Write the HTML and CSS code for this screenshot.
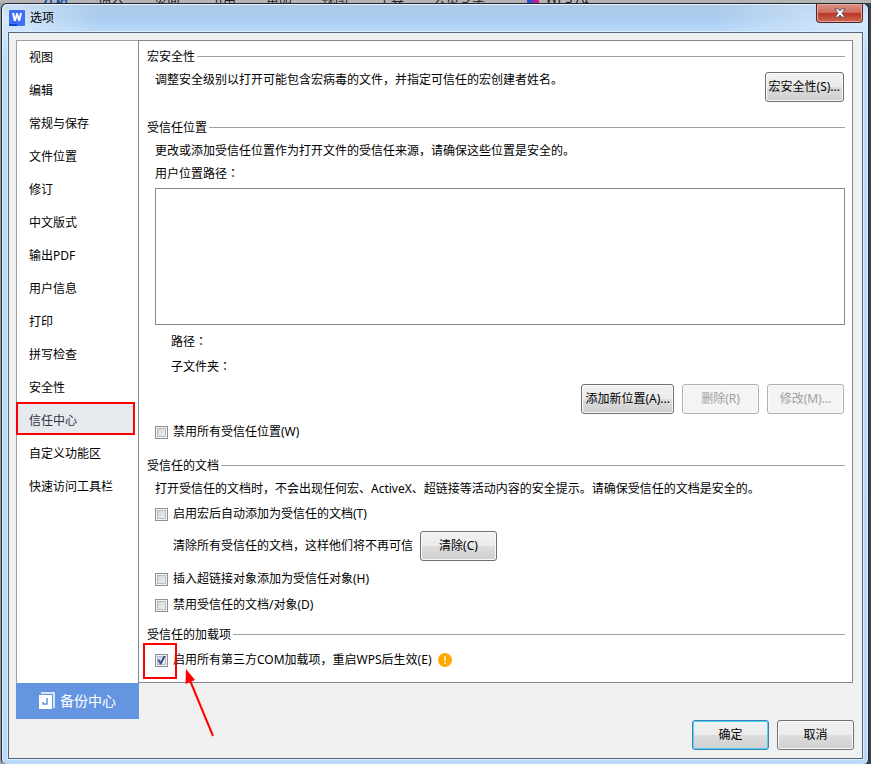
FILE: index.html
```html
<!DOCTYPE html>
<html lang="zh-CN">
<head>
<meta charset="utf-8">
<title>选项</title>
<link rel="stylesheet" href="styles.css">
</head>
<body>
<div class="ribbon" aria-hidden="true">
  <span class="tab active">开始</span><span class="tab">插入</span><span class="tab">页面</span><span class="tab">引用</span><span class="tab">审阅</span><span class="tab">视图</span><span class="tab">工具</span><span class="tab wide">会员专享</span><span class="ai-mark"></span><span class="tab">WPS AI</span>
</div>
<div class="window">
  <header class="titlebar">
    <svg class="logo" viewBox="0 0 16 16" aria-hidden="true">
      <rect width="16" height="16" rx="1" fill="#3f6df6"/>
      <path d="M0 14h8v2H1a1 1 0 0 1-1-1z" fill="#0b45c8"/>
      <path d="M3 3h2.200l.9 4.500L7.300 3h1.600l1.200 4.500L11 3h2l-1.900 8H9.200L8 7 6.800 11H4.900z" fill="#fff"/>
    </svg>
    <h1>选项</h1>
    <button class="close" aria-label="关闭">
      <svg viewBox="0 0 12 10" aria-hidden="true">
        <path d="M1 .8h3L6 3 8 .8h3L7.900 5 11 9.200H8L6 7 4 9.200H1L4.100 5z" fill="#fff" stroke="#53586a" stroke-width="1"/>
      </svg>
    </button>
  </header>
  <div class="client">
    <div class="panes">
      <nav class="sidebar">
        <a href="#">视图</a>
        <a href="#">编辑</a>
        <a href="#">常规与保存</a>
        <a href="#">文件位置</a>
        <a href="#">修订</a>
        <a href="#">中文版式</a>
        <a href="#">输出PDF</a>
        <a href="#">用户信息</a>
        <a href="#">打印</a>
        <a href="#">拼写检查</a>
        <a href="#">安全性</a>
        <a href="#" class="current" aria-current="page">信任中心</a>
        <a href="#">自定义功能区</a>
        <a href="#">快速访问工具栏</a>
      </nav>
      <main class="panel">
        <section class="group">
          <h2>宏安全性</h2>
          <div class="row split">
            <p>调整安全级别以打开可能包含宏病毒的文件，并指定可信任的宏创建者姓名。</p>
            <button class="btn tight">宏安全性(S)...</button>
          </div>
        </section>
        <section class="group">
          <h2>受信任位置</h2>
          <p class="row">更改或添加受信任位置作为打开文件的受信任来源，请确保这些位置是安全的。</p>
          <p class="row" id="paths">用户位置路径<span class="colon" lang="zh-TW">：</span></p>
          <div class="listbox" role="listbox" aria-labelledby="paths" tabindex="0"></div>
          <p class="row detail">路径<span class="colon" lang="zh-TW">：</span></p>
          <p class="row detail">子文件夹<span class="colon" lang="zh-TW">：</span></p>
          <div class="row actions">
            <button class="btn tight">添加新位置(A)...</button>
            <button class="btn" disabled>删除(R)</button>
            <button class="btn" disabled>修改(M)...</button>
          </div>
          <label class="row check"><input type="checkbox"><span>禁用所有受信任位置(W)</span></label>
        </section>
        <section class="group documents">
          <h2>受信任的文档</h2>
          <p class="row">打开受信任的文档时，不会出现任何宏、ActiveX、超链接等活动内容的安全提示。请确保受信任的文档是安全的。</p>
          <label class="row check"><input type="checkbox"><span>启用宏后自动添加为受信任的文档(T)</span></label>
          <div class="row clear">
            <p>清除所有受信任的文档，这样他们将不再可信</p>
            <button class="btn">清除(C)</button>
          </div>
          <label class="row check"><input type="checkbox"><span>插入超链接对象添加为受信任对象(H)</span></label>
          <label class="row check"><input type="checkbox"><span>禁用受信任的文档/对象(D)</span></label>
        </section>
        <section class="group">
          <h2>受信任的加载项</h2>
          <div class="row addin">
            <label class="check"><input type="checkbox" checked><span>启用所有第三方COM加载项，重启WPS后生效(E)</span></label>
            <svg class="warn" viewBox="0 0 14 14" aria-hidden="true">
              <circle cx="7" cy="7" r="7" fill="#ffa800"/>
              <path d="M6 3h2v5H6zM6 9h2v2H6z" fill="#ffe2a0"/>
            </svg>
            <svg class="callout" viewBox="0 0 72 96" aria-hidden="true">
              <rect x="1" y="1" width="32" height="34" fill="none" stroke="#f00" stroke-width="2"/>
              <path d="M46 35L70 93" stroke="#f00" stroke-width="2"/>
              <path d="M43 26L42.500 41 52 37z" fill="#f00"/>
            </svg>
          </div>
        </section>
      </main>
    </div>
    <footer class="footer">
      <button class="backup">
        <svg viewBox="0 0 16 18" aria-hidden="true">
          <path d="M2 1h13v15" fill="none" stroke="#fff" stroke-width="1.500"/>
          <path d="M0 3h13v14H0z" fill="#fff"/>
          <path d="M8 6v6H4v-2" fill="none" stroke="#6495e1" stroke-width="1.500"/>
        </svg>
        <span>备份中心</span>
      </button>
      <div class="confirm">
        <button class="btn primary">确定</button>
        <button class="btn">取消</button>
      </div>
    </footer>
  </div>
</div>
</body>
</html>
```
FILE: styles.css
```css
* {
  box-sizing: border-box;
}

body {
  margin: 0;
  min-height: 100vh;
  display: flex;
  flex-direction: column;
  background: linear-gradient(90deg, #9a9fa5 50%, #3c4146 50%);
  color: #000;
  font: 12px/16px "Noto Sans", "Noto Sans CJK SC", sans-serif;
}

h1, h2, p {
  margin: 0;
  font-size: 12px;
  font-weight: 400;
}

button {
  font: inherit;
}

/* Ribbon of the application behind the dialog */
.ribbon {
  height: 3px;
  padding-left: 27px;
  display: flex;
  align-items: flex-end;
  overflow: hidden;
  background: #b4b4b4;
  color: #222;
  font-size: 13px;
  line-height: 10px;
}

.tab {
  flex: none;
  width: 56px;
  text-align: center;
}

.tab.active {
  color: #1450b4;
  font-weight: 700;
}

.tab.wide {
  width: 80px;
}

.ai-mark {
  width: 12px;
  height: 3px;
  margin-left: 28px;
  background: linear-gradient(90deg, #2b4fd0 50%, #c02090 50%);
}

/* Window frame */
.window {
  flex: 1;
  margin: 0 2px 0 1px;
  padding: 0 5px 5px 6px;
  display: flex;
  flex-direction: column;
  border: 1px solid #20262e;
  border-bottom: 0;
  border-radius: 6px 6px 5px 5px;
  box-shadow: inset 1px 1px 0 #e8f3ff, inset -1px 0 0 #d8ecff;
  background:
    radial-gradient(100px 40px at 0 16px, #e2effccc, #e2effc00),
    radial-gradient(160px 40px at 100% 16px, #e2effccc, #e2effc00),
    linear-gradient(#aecae8, #a9cbee 14px, #b9dafb 28px, #b9d9f9);
}

.titlebar {
  height: 28px;
  display: flex;
  align-items: center;
  gap: 5px;
  padding-left: 1px;
}

.logo {
  width: 16px;
  height: 16px;
}

.close {
  width: 47px;
  height: 19px;
  margin-left: auto;
  align-self: flex-start;
  padding: 0;
  display: flex;
  align-items: center;
  justify-content: center;
  border: 1px solid #4d2529;
  border-top: 0;
  border-radius: 0 0 4px 4px;
  box-shadow: inset 0 0 0 1px #e5a69c;
  background: linear-gradient(#dc9488, #cd6a5a 48%, #b83422 50%, #d26650);
}

.close svg {
  width: 12px;
  height: 10px;
}

.client {
  flex: 1;
  display: flex;
  flex-direction: column;
  padding: 7px 9px 0 7px;
  border: 1px solid #56677c;
  box-shadow: 0 0 0 1px #d9ecff;
  background: #f0f0f0;
}

.panes {
  flex: 1;
  display: flex;
}

.sidebar {
  width: 122px;
  border: 1px solid #a0a0a0;
  border-right: 0;
  border-bottom: 0;
  background: #fff;
}

.sidebar a {
  position: relative;
  display: flex;
  align-items: center;
  height: 33px;
  padding-left: 12px;
  color: #000;
  text-decoration: none;
}

.sidebar .current {
  z-index: 0;
  color: #334;
}

.sidebar .current::before {
  content: "";
  position: absolute;
  inset: -2px 3px 2px -1px;
  z-index: -1;
  border: 2px solid #f00;
  background: #e6e9ee;
}

.panel {
  flex: 1;
  min-width: 0;
  padding: 8px 7px 0 8px;
  border: 1px solid #828790;
  background: #fff;
}

/* Titled groups */
.group {
  display: flow-root;
  margin-bottom: 18px;
}

.group.documents {
  margin-bottom: 14px;
}

.group:last-child {
  margin-bottom: 0;
}

.group h2 {
  display: flex;
  align-items: center;
  gap: 2px;
  margin-bottom: 7px;
}

.group h2::after {
  content: "";
  flex: 1;
  height: 2px;
  border-top: 1px solid #a0a0a0;
}

.row {
  margin: 7px 0 0 8px;
}

.row.detail {
  margin: 9px 0 0 24px;
}

.split {
  display: flex;
  justify-content: space-between;
  gap: 8px;
  padding-right: 1px;
}

.listbox {
  height: 137px;
  margin: 6px 0 0 8px;
  border: 1px solid #828790;
  background: #fff;
}

.actions {
  display: flex;
  justify-content: flex-end;
  gap: 8px;
  margin-top: 9px;
  padding-right: 1px;
}

.check {
  display: flex;
  align-items: center;
  gap: 5px;
}

.row.check {
  width: max-content;
  margin-top: 10px;
}

p + .row.check {
  margin-top: 9px;
}

.row.clear {
  display: flex;
  align-items: center;
  gap: 7px;
  margin: 9px 0 0 26px;
}

.check input {
  appearance: none;
  width: 13px;
  height: 13px;
  margin: 0;
  border: 1px solid #8e8f8f;
  box-shadow: inset 0 0 0 1px #f4f4f4, inset 0 0 0 2px #b8bdc4;
  background: linear-gradient(135deg, #cbcfd5, #f6f6f6);
}

.check input:checked::after {
  content: "";
  display: block;
  width: 9px;
  height: 9px;
  margin: 1px;
  background: #354f98;
  clip-path: polygon(5% 50%, 22% 42%, 40% 68%, 76% 0, 100% 0, 48% 100%, 35% 100%);
}

.colon {
  font-family: "Noto Sans CJK TC", sans-serif;
  line-height: 1;
}

.addin {
  position: relative;
  display: flex;
  align-items: center;
  gap: 7px;
  margin-top: 9px;
}

.warn {
  width: 14px;
  height: 14px;
}

.callout {
  position: absolute;
  left: -12px;
  top: -9px;
  width: 72px;
  height: 96px;
  pointer-events: none;
}

/* Buttons */
.btn {
  flex: none;
  width: 77px;
  height: 30px;
  padding: 0;
  border: 1px solid #707070;
  border-radius: 3px;
  box-shadow: inset 0 0 0 1px #fafafa;
  background: linear-gradient(#f2f2f2, #ebebeb 49%, #dddddd 50%, #cfcfcf);
  color: #000;
}

.btn.tight {
  width: auto;
  padding: 0 3px;
}

.btn:disabled {
  border-color: #adb2b5;
  background: #f4f4f4;
  color: #a0a0a0;
}

.btn.primary {
  border-color: #3c7fb1;
  box-shadow: inset 0 0 0 1px #4fd3f7;
}

.footer {
  display: flex;
  justify-content: space-between;
  align-items: flex-start;
  height: 75px;
}

.backup {
  width: 123px;
  height: 36px;
  padding: 0;
  display: flex;
  align-items: center;
  justify-content: center;
  gap: 5px;
  border: 0;
  background: #6495e1;
  color: #fff;
  font-size: 14px;
}

.backup svg {
  width: 16px;
  height: 18px;
}

.confirm {
  display: flex;
  gap: 8px;
  padding-top: 37px;
  margin-right: -1px;
}
```
